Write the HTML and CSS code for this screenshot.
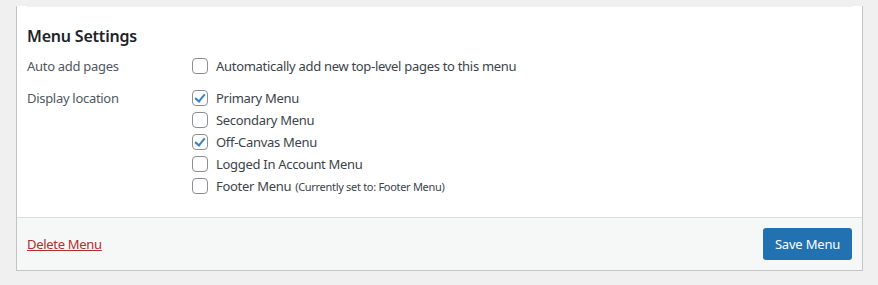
FILE: index.html
```html
<!DOCTYPE html>
<html lang="en">
<head>
    <meta charset="UTF-8">
    <title>Menu Settings</title>
    <link rel="stylesheet" href="styles.css">
</head>
<body>

<div class="menu-edit">
    <div class="menu-body">
        <div class="menu-settings">
            <h3>Menu Settings</h3>

            <div class="setting-row">
                <div class="setting-label">Auto add pages</div>
                <div class="setting-input">
                    <label class="check"><span class="box"></span>Automatically add new top-level pages to this menu</label>
                </div>
            </div>

            <div class="setting-row locations">
                <div class="setting-label">Display location</div>
                <div class="setting-input">
                    <label class="check"><span class="box checked"></span>Primary Menu</label>
                    <label class="check"><span class="box"></span>Secondary Menu</label>
                    <label class="check"><span class="box checked"></span>Off-Canvas Menu</label>
                    <label class="check"><span class="box"></span>Logged In Account Menu</label>
                    <label class="check"><span class="box"></span>Footer Menu <span class="note">(Currently set to: Footer Menu)</span></label>
                </div>
            </div>
        </div>
    </div>

    <div class="menu-footer">
        <a href="#" class="delete">Delete Menu</a>
        <button type="button" class="save">Save Menu</button>
    </div>
</div>

</body>
</html>
```

FILE: styles.css
```css
* {
    margin: 0;
    padding: 0;
    box-sizing: border-box;
    font-family: 'Noto Sans', sans-serif;
}
body {
    background: #f0f0f1;
    color: #3c434a;
    font-size: 13px;
    letter-spacing: -0.3px;
}
.menu-edit {
    margin-left: 16px;
    width: 847px;
    background: #fff;
    border: 1px solid #c3c4c7;
    border-top: none;
}
.menu-body {
    padding: 0 10px 10px;
}
.menu-settings {
    border-top: 1px solid #f0f0f1;
    margin-top: 6px;
}
.menu-settings h3 {
    font-size: 16px;
    font-weight: 600;
    color: #1d2327;
    margin: 18px 0 8px;
    letter-spacing: -0.2px;
}
.setting-row {
    display: flex;
    margin-bottom: 10px;
}
.setting-label {
    width: 165px;
    flex-shrink: 0;
    color: #50575e;
    line-height: 22px;
}
.setting-input {
    display: flex;
    flex-direction: column;
}
.check {
    display: flex;
    align-items: center;
    height: 22px;
    color: #3c434a;
}
.box {
    width: 16px;
    height: 16px;
    border: 1px solid #8c8f94;
    border-radius: 4px;
    background: #fff;
    margin-right: 8px;
    position: relative;
}
.box.checked::after {
    content: "";
    position: absolute;
    left: 4px;
    top: 1px;
    width: 4px;
    height: 8px;
    border: solid #3582c4;
    border-width: 0 2px 2px 0;
    transform: rotate(40deg);
}
.note {
    font-size: 11px;
    margin-left: 4px;
}
.menu-footer {
    display: flex;
    justify-content: space-between;
    align-items: center;
    background: #f6f7f7;
    border-top: 1px solid #dcdcde;
    padding: 0 10px;
    height: 53px;
}
.delete {
    color: #b32d2e;
    text-decoration: underline;
}
.save {
    background: #2271b1;
    color: #fff;
    border: none;
    border-radius: 3px;
    font-size: 13px;
    letter-spacing: -0.2px;
    width: 89px;
    height: 32px;
    cursor: pointer;
}
```
